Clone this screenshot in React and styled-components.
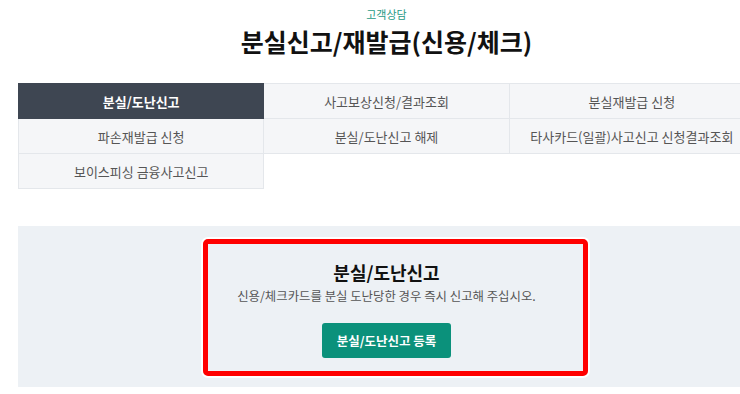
import React from 'react'
import styled, { createGlobalStyle } from 'styled-components'

const GlobalStyle = createGlobalStyle`
  html, body {
    margin: 0;
    padding: 0;
    overflow: hidden;
    background: #fff;
    font-family: 'Noto Sans CJK KR', 'Noto Sans', sans-serif;
  }
`

const Page = styled('div')`
  width: 737px;
  padding-left: 18px;
`

const Header = styled('header')`
  display: flex;
  flex-direction: column;
  align-items: center;
  padding-top: 5px;
`

const Category = styled('div')`
  font-size: 11px;
  line-height: 18px;
  color: #1f9a86;
`

const Title = styled('h1')`
  margin: 1px 0 0;
  font-size: 25px;
  line-height: 35px;
  font-weight: 700;
  color: #111;
`

const TabGrid = styled('div')`
  display: grid;
  grid-template-columns: repeat(3, 1fr);
  margin-top: 24px;
  padding: 0 1px 1px 0;
`

const Tab = styled('div')`
  display: flex;
  align-items: center;
  justify-content: center;
  height: 34px;
  margin: 0 -1px -1px 0;
  border: 1px solid ${({ active }) => (active ? '#3e4652' : '#e4e7eb')};
  background: ${({ active }) => (active ? '#3e4652' : '#f5f6f8')};
  color: ${({ active }) => (active ? '#fff' : '#555')};
  font-size: 13px;
  font-weight: ${({ active }) => (active ? 700 : 400)};
  position: relative;
  z-index: ${({ active }) => (active ? 1 : 0)};
`

const Panel = styled('section')`
  position: relative;
  margin-top: 37px;
  background: #edf1f5;
  display: flex;
  flex-direction: column;
  align-items: center;
  padding: 33px 0 29px;
`

const Highlight = styled('div')`
  position: absolute;
  left: 185px;
  top: 13px;
  width: 375px;
  height: 127px;
  border: 5px solid #ff0000;
  border-radius: 5px;
  box-shadow: 0 0 0 2px #fff;
  pointer-events: none;
`

const PanelTitle = styled('h2')`
  margin: 0;
  font-size: 18px;
  line-height: 26px;
  font-weight: 700;
  color: #111;
`

const PanelText = styled('p')`
  margin: 1px 0 0;
  font-size: 12.4px;
  line-height: 20px;
  color: #555;
`

const Button = styled('button')`
  margin-top: 17px;
  height: 35px;
  padding: 0 15px;
  border: none;
  border-radius: 3px;
  background: #0b917b;
  color: #fff;
  font-family: inherit;
  font-size: 12.5px;
  font-weight: 700;
  cursor: pointer;
`

const tabs = [
  '분실/도난신고',
  '사고보상신청/결과조회',
  '분실재발급 신청',
  '파손재발급 신청',
  '분실/도난신고 해제',
  '타사카드(일괄)사고신고 신청결과조회',
  '보이스피싱 금융사고신고',
]

const App = () => (
  <Page>
    <GlobalStyle />
    <Header>
      <Category>고객상담</Category>
      <Title>분실신고/재발급(신용/체크)</Title>
    </Header>
    <TabGrid>
      {tabs.map((label, i) => (
        <Tab key={label} active={i === 0}>
          {label}
        </Tab>
      ))}
    </TabGrid>
    <Panel>
      <PanelTitle>분실/도난신고</PanelTitle>
      <PanelText>신용/체크카드를 분실 도난당한 경우 즉시 신고해 주십시오.</PanelText>
      <Button>분실/도난신고 등록</Button>
      <Highlight />
    </Panel>
  </Page>
)

export default App
